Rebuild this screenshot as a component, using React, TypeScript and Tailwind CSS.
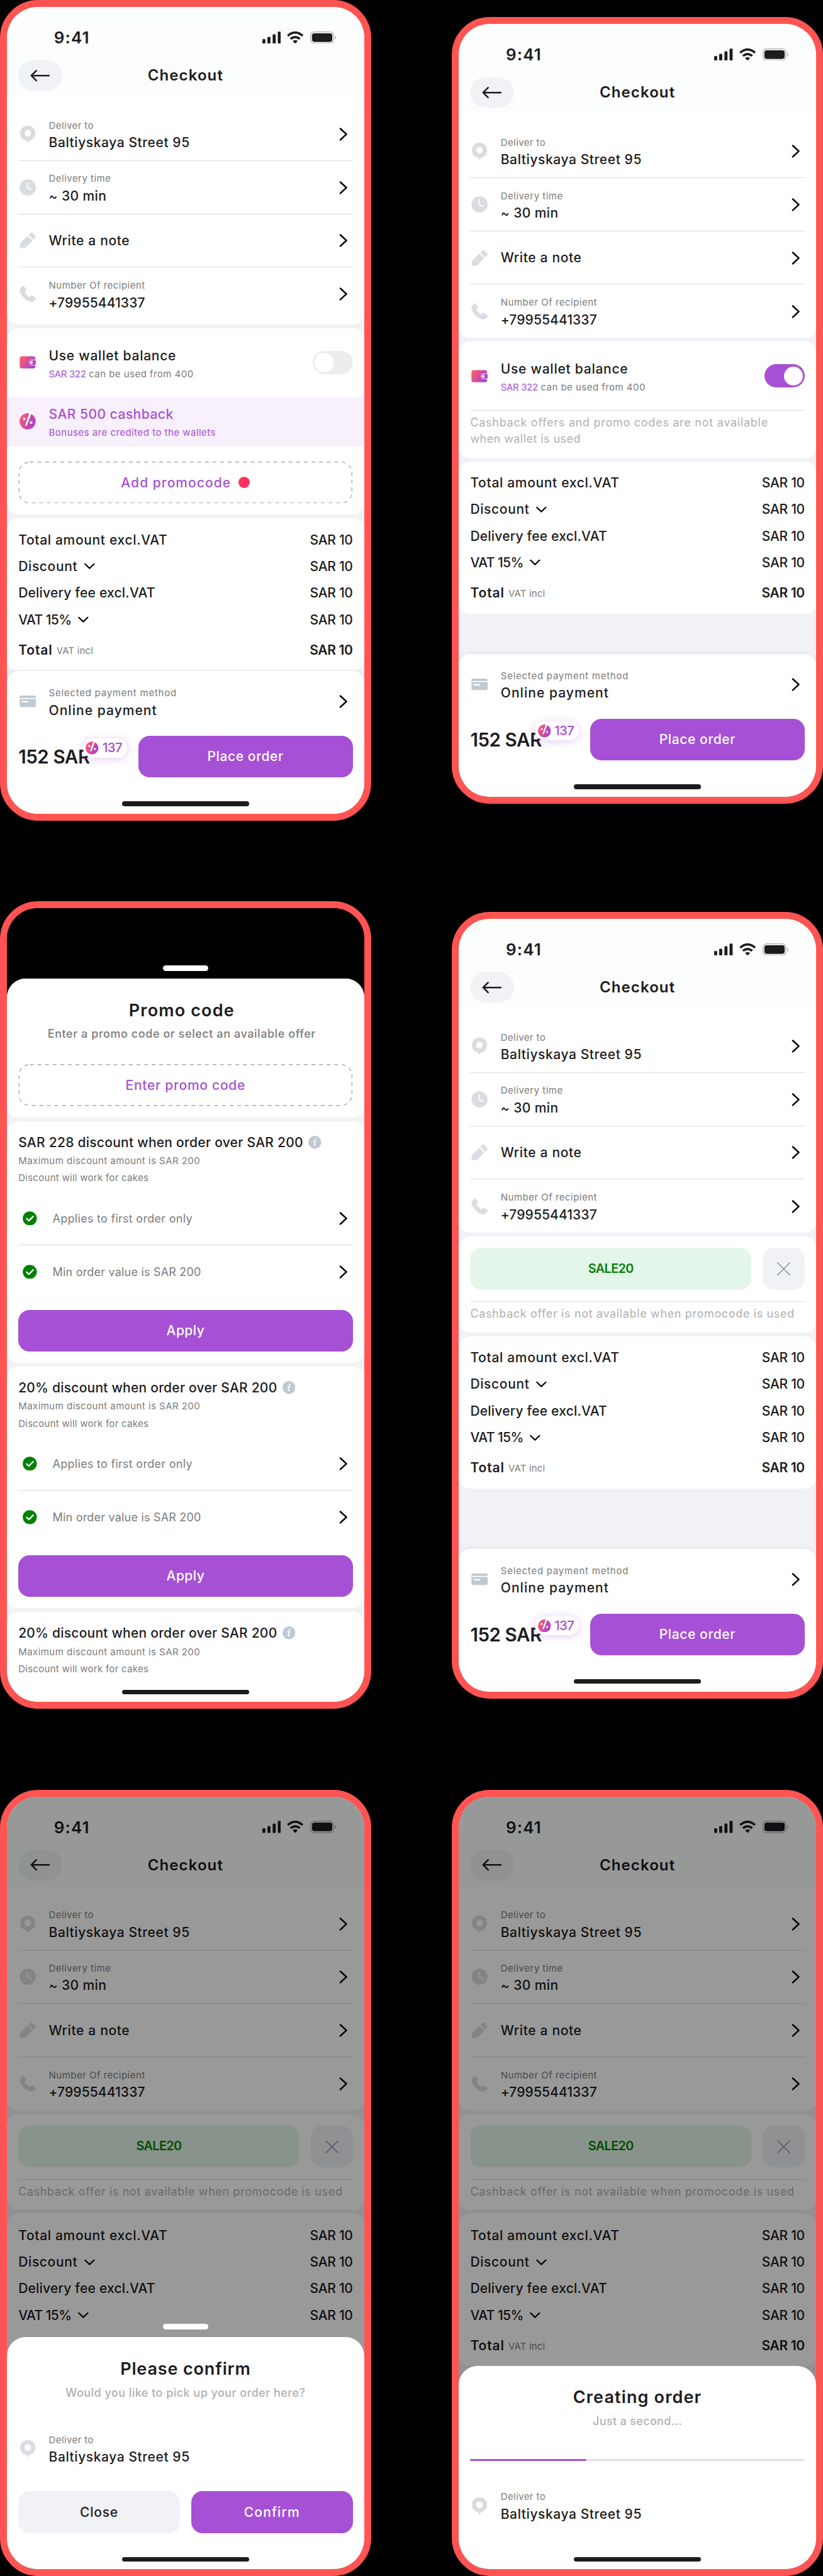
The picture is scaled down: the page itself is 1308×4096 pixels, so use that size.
import type { ReactNode } from "react";

/* One spacing unit equals one design point (see --spacing on the root). */

const BODY = "text-[21px] font-medium text-[#1c1c1e]";
const SMALL = "text-[15px] text-[#7c7c7c]";

/* ---------- icons ---------- */

function StatusIcons() {
  return (
    <div className="flex items-center">
      <svg className="w-19.5 h-13" viewBox="0 0 19.5 13" fill="#1c1c1e">
        <rect x="0" y="7.9" width="3.2" height="5" rx="1" />
        <rect x="5.3" y="5.6" width="3.2" height="7.3" rx="1" />
        <rect x="10.8" y="3" width="3.2" height="9.9" rx="1" />
        <rect x="16.2" y="0.2" width="3.2" height="12.7" rx="1" />
      </svg>
      <svg className="ml-6.5 w-17.5 h-13" viewBox="0 0 17.5 13" fill="none" stroke="#1c1c1e" strokeWidth="2.4">
        <path d="M0.9 4.5Q8.7-2.3 16.5 4.5" />
        <path d="M3.8 7.9Q8.7 3.7 13.6 7.9" />
        <path d="M8.7 12.9L6 10.1Q8.7 8 11.4 10.1Z" fill="#1c1c1e" stroke="none" />
      </svg>
      <svg className="ml-7 w-27.5 h-13" viewBox="0 0 27.5 13">
        <rect x="0.5" y="0.5" width="24" height="12" rx="3.8" fill="none" stroke="#b4b4b5" />
        <rect x="1.9" y="2" width="21.3" height="9" rx="2.5" fill="#1c1c1e" />
        <path d="M26 4.7v3.8c.9-.4 1.4-1 1.4-1.9S26.9 5.1 26 4.7z" fill="#b4b4b5" />
      </svg>
    </div>
  );
}

const ICON = "w-20 h-20 shrink-0";

const PinIcon = () => (
  <svg className={ICON} viewBox="0 0 20 20" fill="#d9dce1">
    <path
      fillRule="evenodd"
      d="M10 1.2a8 8 0 0 1 8 8c0 3.9-2.6 6.5-5.8 7.5-.9.3-1.3.9-1.6 1.8l-.6 1-.6-1c-.3-.9-.7-1.5-1.6-1.8C4.6 15.7 2 13.1 2 9.2a8 8 0 0 1 8-8zm0 4.5a3.4 3.4 0 1 0 0 6.8 3.4 3.4 0 0 0 0-6.8z"
    />
  </svg>
);

const ClockIcon = () => (
  <svg className={ICON} viewBox="0 0 20 20">
    <circle cx="10" cy="10" r="8.5" fill="#d9dce1" />
    <path d="M9.6 4.5V10l4.5 2.3" fill="none" stroke="#fff" strokeWidth="1.2" />
  </svg>
);

const PencilIcon = () => (
  <svg className={ICON} viewBox="0 0 20 20" fill="#d9dce1">
    <path d="M9.9 5.3L15 10.4 8.2 17.2Q7.6 17.8 6.6 17.9L3 18.4Q1.4 18.5 1.5 17L2 13.8Q2.1 12.9 2.8 12.3Z" />
    <path d="M10.9 4.3l1.7-1.7q1.4-1.4 2.8 0l2.3 2.3q1.4 1.4 0 2.8l-1.7 1.7z" />
  </svg>
);

const PhoneIcon = () => (
  <svg className={ICON} viewBox="0 0 20 20" fill="#d9dce1">
    <path d="M4.4 1.9Q5.2 1.4 5.9 2.1L8 4.7Q8.7 5.7 7.9 6.6L6.7 8Q8.5 11.5 12 13.5L13.4 12.2Q14.3 11.5 15.2 12.1L18.1 14.1Q18.9 14.8 18.2 15.7C16.5 18.2 14 19.1 11.5 18C7 16.2 3.5 12.5 1.9 8.5C.9 5.9 2.4 3.6 4.4 1.9Z" />
  </svg>
);

const CardIcon = () => (
  <svg className={ICON} viewBox="0 0 20 20">
    <rect x="1.5" y="4" width="17" height="12" rx="1.5" fill="#c0c8d2" />
    <rect x="1.5" y="6.5" width="17" height="1.1" fill="#fff" />
    <rect x="3.5" y="9.8" width="7.4" height="1.5" rx="0.7" fill="#fff" />
  </svg>
);

const Gradient = ({ id }: { id: string }) => (
  <linearGradient id={id} x1="0" y1="0.2" x2="1" y2="0.7">
    <stop offset="0.05" stopColor="#ff5b6c" />
    <stop offset="0.95" stopColor="#a73fd2" />
  </linearGradient>
);

const WalletIcon = () => (
  <svg className={ICON} viewBox="0 0 20 20">
    <defs>
      <Gradient id="wallet" />
    </defs>
    <rect x="1.5" y="3.7" width="16.4" height="12.7" rx="2.4" fill="url(#wallet)" />
    <path d="M18.5 7.5h-4.1a2.7 2.7 0 0 0 0 5.4h4.1" fill="#b546c4" stroke="#fff" strokeWidth="0.6" />
    <circle cx="13.9" cy="10.2" r="1.4" fill="#fff" />
  </svg>
);

const PercentIcon = ({ className }: { className: string }) => (
  <svg className={className} viewBox="1.5 1.5 17 17">
    <defs>
      <Gradient id="percent" />
    </defs>
    <circle cx="10" cy="10" r="8.5" fill="url(#percent)" />
    <path d="M11.9 1.3h2.3L9.2 14.5H7.3z" fill="#fff" />
    <circle cx="6.5" cy="7.5" r="1.35" fill="#fff" />
    <circle cx="13.8" cy="11.4" r="1.35" fill="#fff" />
  </svg>
);

const ChevronRight = () => (
  <svg className={ICON} viewBox="0 0 20 20" fill="none" stroke="#000" strokeWidth="1.7" strokeLinecap="round" strokeLinejoin="round">
    <path d="M7.2 4.3L13.6 10.2 7.2 16.1" />
  </svg>
);

const ChevronDown = () => (
  <svg className="ml-7 w-11 h-7" viewBox="0 0 11 7" fill="none" stroke="#000" strokeWidth="1.4" strokeLinecap="round" strokeLinejoin="round">
    <path d="M0.8 1.2L5.5 5.7 10.2 1.2" />
  </svg>
);

const InfoIcon = () => (
  <svg className="ml-5.5 w-13.5 h-13.5" viewBox="0 0 14 14">
    <circle cx="7" cy="7" r="7" fill="#c0c8d2" />
    <circle cx="7.9" cy="3.6" r="0.95" fill="#fff" />
    <path d="M5.4 5.9h2.2L6.5 10q-.1.7 1.3.2" fill="none" stroke="#fff" strokeWidth="1.2" />
  </svg>
);

const CheckIcon = () => (
  <svg className="w-15 h-15 shrink-0" viewBox="0 0 15 15">
    <circle cx="7.5" cy="7.5" r="7.4" fill="#008000" />
    <path d="M4.2 7.8l2.4 2.2 4.5-4.6" fill="none" stroke="#fff" strokeWidth="1.5" strokeLinecap="round" strokeLinejoin="round" />
  </svg>
);

/* ---------- building blocks ---------- */

function Phone({ height, children, dark = false }: { height: string; children: ReactNode; dark?: boolean }) {
  return (
    <div className={`w-390 border-[11.34px] border-[#ff5452] rounded-[60.5px] ${height}`}>
      <div className={`relative flex h-full flex-col overflow-hidden rounded-[49px] ${dark ? "bg-black" : "bg-[#f1f2f5]"}`}>
        {children}
      </div>
    </div>
  );
}

function TopBar() {
  return (
    <div className="shrink-0 bg-[#fcfdfd]">
      <div className="flex h-54 items-center justify-between pt-10 pr-29 pl-49.5">
        <span className="text-[26px] font-semibold tracking-[1.1px] text-[#1c1c1e]">9:41</span>
        <StatusIcons />
      </div>
      <div className="grid h-40 grid-cols-[1fr_auto_1fr] items-center px-12 pb-4">
        <button className="h-32 w-46 rounded-full bg-[#f1f2f5]">
          <svg className="h-32 w-46" viewBox="0 0 46 32" fill="none" stroke="#1c1c1e" strokeWidth="1.7" strokeLinecap="round" strokeLinejoin="round">
            <path d="M32.3 16H13.8M19 10.8L13.8 16l5.2 5.2" />
          </svg>
        </button>
        <h1 className="text-[24px] font-semibold tracking-[1.1px] text-[#1c1c1e]">Checkout</h1>
        <span />
      </div>
    </div>
  );
}

function InfoRow({ icon, label, value, last = false, chevron = true }: { icon: ReactNode; label?: ReactNode; value: ReactNode; last?: boolean; chevron?: boolean }) {
  return (
    <div className={`flex h-56 items-center ${last ? "" : "border-b-[1.5px] border-[#d9dce1]"}`}>
      {icon}
      <div className="ml-12 grow pt-1.5">
        {label && <div className={`h-17.5 leading-[26.5px] ${SMALL}`}>{label}</div>}
        <div className={`h-19 leading-[28.7px] ${BODY}`}>{value}</div>
      </div>
      {chevron && <ChevronRight />}
    </div>
  );
}

const DeliverLabel = () => <span className="tracking-[0.4px]">Deliver to</span>;
const Street = () => <span className="tracking-[0.58px]">Baltiyskaya Street 95</span>;

function Details({ pad }: { pad: string }) {
  return (
    <section className={`shrink-0 rounded-b-[18px] bg-white px-12 pt-12 ${pad}`}>
      <InfoRow icon={<PinIcon />} label={<DeliverLabel />} value={<Street />} />
      <InfoRow icon={<ClockIcon />} label={<span className="tracking-[0.48px]">Delivery time</span>} value={<span className="tracking-[0.4px]">~ 30 min</span>} />
      <InfoRow icon={<PencilIcon />} value={<span className="tracking-[0.65px]">Write a note</span>} />
      <InfoRow icon={<PhoneIcon />} label={<span className="tracking-[0.48px]">Number Of recipient</span>} value={<span className="tracking-[0.1px]">+79955441337</span>} last />
    </section>
  );
}

function WalletRow({ on }: { on: boolean }) {
  return (
    <div className="flex h-72 items-center px-12">
      <WalletIcon />
      <div className="ml-12 grow pt-5">
        <div className={`h-20 leading-[30px] tracking-[0.75px] ${BODY}`}>Use wallet balance</div>
        <div className={`h-19 leading-[28.7px] ${SMALL}`}>
          <span className="tracking-[-0.35px] text-[#a650d6]">SAR 322</span>
          <span className="tracking-[0.46px]"> can be used from 400</span>
        </div>
      </div>
      <span className={`flex h-24 w-42 items-center rounded-full px-2 ${on ? "justify-end bg-[#a650d6]" : "bg-[#ededed]"}`}>
        <span className="size-20 rounded-full bg-white" />
      </span>
    </div>
  );
}

function DashedButton({ children }: { children: ReactNode }) {
  return (
    <button className="relative flex h-44 w-full items-center justify-center">
      <svg className="absolute inset-0 h-full w-full" viewBox="0 0 351 44" fill="none">
        <rect x="0.5" y="0.5" width="350" height="43" rx="11.5" stroke="#a8a8a8" strokeWidth="0.9" strokeDasharray="4 4" />
      </svg>
      {children}
    </button>
  );
}

const AMOUNTS: { name: ReactNode; more?: boolean }[] = [
  { name: <span className="tracking-[0.67px]">Total amount excl.VAT</span> },
  { name: <span className="tracking-[0.65px]">Discount</span>, more: true },
  { name: <span className="tracking-[0.22px]">Delivery fee excl.VAT</span> },
  { name: <span className="tracking-[-0.55px]">VAT 15%</span>, more: true },
];

function Totals({ withTotal = true }: { withTotal?: boolean }) {
  return (
    <section className="h-160 shrink-0 rounded-[18px] bg-white px-12 pt-8.5">
      {AMOUNTS.map((a, i) => (
        <div key={i} className={`flex h-28 items-center ${BODY}`}>
          {a.name}
          {a.more && <ChevronDown />}
          <span className="ml-auto tracking-[-0.3px]">SAR 10</span>
        </div>
      ))}
      {withTotal && (
        <div className="flex h-36 items-center text-[21px] font-semibold text-[#1c1c1e]">
          <span className="tracking-[0.9px]">Total</span>
          <span className={`ml-4 pt-1.5 font-normal tracking-[0.15px] ${SMALL}`}>VAT incl</span>
          <span className="ml-auto tracking-[-0.35px]">SAR 10</span>
        </div>
      )}
    </section>
  );
}

const HomeIndicator = () => (
  <div className="flex h-38 shrink-0 items-end justify-center pb-8">
    <span className="h-5 w-134 rounded-full bg-[#1c1c1e]" />
  </div>
);

function PayPanel() {
  return (
    <section className="mt-auto h-150 shrink-0 rounded-t-[18px] bg-white pt-4 shadow-[0_-2px_10px_rgba(0,0,0,0.06)]">
      <div className="px-12">
        <InfoRow icon={<CardIcon />} label={<span className="tracking-[0.76px]">Selected payment method</span>} value={<span className="tracking-[1.05px]">Online payment</span>} last />
      </div>
      <div className="flex px-12 pt-8">
        <div className="relative flex h-44 w-126 shrink-0 items-center">
          <span className="pt-1 text-[29.5px] leading-none font-semibold tracking-[-0.4px] text-[#1c1c1e]">152 SAR</span>
          <span className="absolute top-3 left-68 flex h-20 w-46 items-center rounded-full bg-white pl-3 shadow-[0_2px_14px_rgba(166,80,214,0.3)]">
            <PercentIcon className="size-13.5 shrink-0" />
            <span className="ml-4 text-[20.4px] leading-none font-medium tracking-[-0.6px] text-[#a650d6]">137</span>
          </span>
        </div>
        <button className="h-44 grow rounded-[18px] bg-[#a650d6] text-[21px] font-medium tracking-[0.6px] text-white">Place order</button>
      </div>
      <HomeIndicator />
    </section>
  );
}

/* ---------- screens ---------- */

function CashbackScreen() {
  return (
    <Phone height="h-863">
      <TopBar />
      <Details pad="pb-4" />
      <section className="mt-4 mb-4 shrink-0 rounded-[18px] bg-white">
        <WalletRow on={false} />
        <div className="flex h-52 items-center bg-[#f8f0fc] px-12">
          <PercentIcon className="mx-1.5 size-17 shrink-0" />
          <div className="ml-12 pt-4 text-[#a650d6]">
            <div className="h-20 text-[21px] leading-[30px] font-medium tracking-[0.48px]">SAR 500 cashback</div>
            <div className="h-19 text-[15px] leading-[28.7px] tracking-[0.48px]">Bonuses are credited to the wallets</div>
          </div>
        </div>
        <div className="px-12 pt-16 pb-12">
          <DashedButton>
            <span className="pt-0.5 text-[21px] font-medium tracking-[1.05px] text-[#a650d6]">Add promocode</span>
            <span className="ml-8 size-12 rounded-full bg-[#ff3360]" />
          </DashedButton>
        </div>
      </section>
      <Totals />
      <PayPanel />
    </Phone>
  );
}

function WalletScreen() {
  return (
    <Phone height="h-827">
      <TopBar />
      <Details pad="pb-0" />
      <section className="mt-4 mb-4 h-122 shrink-0 rounded-[18px] bg-white">
        <WalletRow on />
        <p className="mx-12 border-t-[1.5px] border-[#d9dce1] pt-4 text-[18px] leading-[25.7px] text-[#b0b0b0]">
          <span className="block tracking-[0.73px] whitespace-nowrap">Cashback offers and promo codes are not available</span>
          <span className="block tracking-[0.44px]">when wallet is used</span>
        </p>
      </section>
      <Totals />
      <PayPanel />
    </Phone>
  );
}

function PromoAppliedContent({ withTotal = true }: { withTotal?: boolean }) {
  return (
    <>
      <TopBar />
      <Details pad="pb-0" />
      <section className="mt-4 mb-4 h-101 shrink-0 rounded-[18px] bg-white px-12 pt-12">
        <div className="flex gap-12">
          <div className="flex h-44 grow items-center justify-center rounded-[18px] bg-[#e3f6e9] text-[19.8px] font-semibold tracking-[-0.6px] text-[#008000]">SALE20</div>
          <button className="flex size-44 items-center justify-center rounded-[18px] bg-[#f1f2f5]">
            <svg className="size-14" viewBox="0 0 14 14" fill="none" stroke="#94a1b2" strokeWidth="1.2" strokeLinecap="round">
              <path d="M0.7 0.7L13.3 13.3M13.3 0.7L0.7 13.3" />
            </svg>
          </button>
        </div>
        <p className="mt-12 border-t-[1.5px] border-[#d9dce1] pt-4 text-[18px] leading-[25.7px] tracking-[0.64px] whitespace-nowrap text-[#b0b0b0]">
          Cashback offer is not available when promocode is used
        </p>
      </section>
      <Totals withTotal={withTotal} />
    </>
  );
}

function SheetHandle() {
  return <span className="mb-8 h-6 w-48 shrink-0 self-center rounded-full bg-white" />;
}

function OfferHead({ title }: { title: ReactNode }) {
  return (
    <>
      <div className={`flex h-20 items-center ${BODY}`}>
        {title}
        <InfoIcon />
      </div>
      <div className={`mt-0.5 leading-[27.2px] ${SMALL}`}>
        <div className="tracking-[0.46px]">Maximum discount amount is SAR 200</div>
        <div className="tracking-[0.28px]">Discount will work for cakes</div>
      </div>
    </>
  );
}

function Offer({ title }: { title: ReactNode }) {
  return (
    <section className="mb-4 h-254 shrink-0 rounded-[18px] bg-white px-12 pt-12">
      <div className="h-62">
        <OfferHead title={title} />
      </div>
      <div className="flex h-56 items-center border-b-[1.5px] border-[#d9dce1] pl-4.5 text-[18px] text-[#7c7c7c]">
        <CheckIcon />
        <span className="ml-16.5 grow pt-1 tracking-[0.28px]">Applies to first order only</span>
        <ChevronRight />
      </div>
      <div className="flex h-56 items-center pl-4.5 text-[18px] text-[#7c7c7c]">
        <CheckIcon />
        <span className="ml-16.5 grow pt-1 tracking-[0.2px]">Min order value is SAR 200</span>
        <ChevronRight />
      </div>
      <button className="mt-12 h-44 w-full rounded-[18px] bg-[#a650d6] text-[21px] font-medium tracking-[0.45px] text-white">Apply</button>
    </section>
  );
}

const TWENTY = <span className="tracking-[0.23px]">20% discount when order over SAR 200</span>;

function PromoSheetScreen() {
  return (
    <Phone height="h-849" dark>
      <div className="flex h-74 shrink-0 flex-col justify-end">
        <SheetHandle />
      </div>
      <div className="flex grow flex-col rounded-t-[30px] bg-[#f1f2f5]">
        <section className="mb-4 h-146 shrink-0 rounded-t-[30px] rounded-b-[18px] bg-white px-12 pt-18">
          <div className="pr-8 text-center">
            <h2 className="h-32 text-[27px] leading-[45px] font-semibold tracking-[1.15px] text-[#1c1c1e]">Promo code</h2>
            <p className="h-16 text-[18px] leading-[24.2px] font-medium tracking-[0.56px] text-[#7c7c7c]">Enter a promo code or select an available offer</p>
          </div>
          <div className="pt-24">
            <DashedButton>
              <span className="pt-0.5 text-[21px] font-medium tracking-[0.74px] text-[#a650d6]">Enter promo code</span>
            </DashedButton>
          </div>
        </section>
        <Offer title={<span className="tracking-[0.26px]">SAR 228 discount when order over SAR 200</span>} />
        <Offer title={TWENTY} />
        <section className="grow rounded-t-[18px] bg-white px-12 pt-12">
          <OfferHead title={TWENTY} />
        </section>
      </div>
      <div className="absolute inset-x-0 bottom-0">
        <HomeIndicator />
      </div>
    </Phone>
  );
}

function SheetTitle({ title, children }: { title: ReactNode; children: ReactNode }) {
  return (
    <div className="pt-18 text-center">
      <h2 className="h-32 text-[27px] leading-[45px] font-semibold text-[#1c1c1e]">{title}</h2>
      <p className="h-16 text-[18px] leading-[25px] font-medium text-[#b0b0b0]">{children}</p>
    </div>
  );
}

function ConfirmScreen() {
  return (
    <Phone height="h-827">
      <PromoAppliedContent withTotal={false} />
      <div className="absolute inset-0 flex flex-col justify-end bg-black/40">
        <SheetHandle />
        <div className="h-244 rounded-t-[30px] bg-white">
          <div className="px-12">
            <SheetTitle title={<span className="tracking-[0.85px]">Please confirm</span>}>
              <span className="tracking-[0.46px]">Would you like to pick up your order here?</span>
            </SheetTitle>
            <div className="pt-23">
              <InfoRow icon={<PinIcon />} label={<DeliverLabel />} value={<Street />} last chevron={false} />
            </div>
            <div className="grid grid-cols-2 gap-12 pt-17 text-[21px] font-medium">
              <button className="h-44 rounded-[18px] bg-[#f1f2f5] tracking-[0.8px] text-[#1c1c1e]">Close</button>
              <button className="h-44 rounded-[18px] bg-[#a650d6] tracking-[1.1px] text-white">Confirm</button>
            </div>
          </div>
          <HomeIndicator />
        </div>
      </div>
    </Phone>
  );
}

function CreatingScreen() {
  return (
    <Phone height="h-827">
      <PromoAppliedContent />
      <div className="absolute inset-0 flex flex-col justify-end bg-black/40">
        <div className="flex h-214 flex-col rounded-t-[30px] bg-white">
          <div className="px-12">
            <SheetTitle title={<span className="tracking-[1.15px]">Creating order</span>}>
              <span className="tracking-[0.33px]">Just a second...</span>
            </SheetTitle>
            <div className="mt-32 h-2 rounded-full bg-[#e2e2e2]">
              <div className="h-2 w-122 rounded-full bg-[#a650d6]" />
            </div>
            <div className="pt-19">
              <InfoRow icon={<PinIcon />} label={<DeliverLabel />} value={<Street />} last chevron={false} />
            </div>
          </div>
          <div className="mt-auto">
            <HomeIndicator />
          </div>
        </div>
      </div>
    </Phone>
  );
}

export default function App() {
  return (
    <main className="grid h-[4096px] w-[1308px] grid-cols-[auto_auto] content-start items-center justify-start gap-85 overflow-hidden bg-black font-['Inter',sans-serif] [--spacing:1.5121px]">
      <CashbackScreen />
      <WalletScreen />
      <PromoSheetScreen />
      <Phone height="h-827">
        <PromoAppliedContent />
        <PayPanel />
      </Phone>
      <ConfirmScreen />
      <CreatingScreen />
    </main>
  );
}
